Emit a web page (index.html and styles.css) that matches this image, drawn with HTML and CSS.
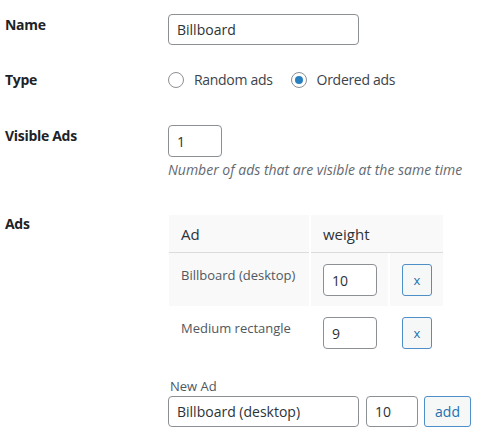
FILE: index.html
```html
<!DOCTYPE html>
<html>
<head>
<meta charset="utf-8">
<link rel="stylesheet" href="styles.css">
</head>
<body>
<div class="form">
  <div class="row row-name">
    <div class="label">Name</div>
    <div class="field"><input class="text name-input" type="text" value="Billboard"></div>
  </div>
  <div class="row row-type">
    <div class="label">Type</div>
    <div class="field radios">
      <label class="radio"><span class="circle"></span><span>Random ads</span></label>
      <label class="radio"><span class="circle checked"></span><span>Ordered ads</span></label>
    </div>
  </div>
  <div class="row row-visible">
    <div class="label">Visible Ads</div>
    <div class="field">
      <input class="text small-input" type="text" value="1">
      <p class="description">Number of ads that are visible at the same time</p>
    </div>
  </div>
  <div class="row row-ads">
    <div class="label">Ads</div>
    <div class="field">
      <table class="ads">
        <thead>
          <tr><th class="c-ad">Ad</th><th colspan="2">weight</th></tr>
        </thead>
        <tbody>
          <tr class="alt">
            <td class="c-ad name-cell">Billboard (desktop)</td>
            <td class="c-w"><input class="text weight-input" type="text" value="10"></td>
            <td class="c-x"><button class="btn x-btn">x</button></td>
          </tr>
          <tr>
            <td class="c-ad name-cell">Medium rectangle</td>
            <td class="c-w"><input class="text weight-input" type="text" value="9"></td>
            <td class="c-x"><button class="btn x-btn">x</button></td>
          </tr>
        </tbody>
      </table>
      <div class="new-ad">
        <div class="new-label">New Ad</div>
        <div class="new-row">
          <input class="text new-name" type="text" value="Billboard (desktop)">
          <input class="text new-weight" type="text" value="10">
          <button class="btn add-btn">add</button>
        </div>
      </div>
    </div>
  </div>
</div>
</body>
</html>
```
FILE: styles.css
```css
html, body {
  margin: 0;
  padding: 0;
  background: #ffffff;
}
body {
  font-family: "Open Sans", "Noto Sans", sans-serif;
  font-size: 14px;
  color: #3c434a;
}
.form {
  padding-left: 5px;
}
.row {
  display: flex;
  align-items: flex-start;
}
.label {
  width: 163px;
  flex: none;
  font-weight: 700;
  color: #1d2327;
  line-height: 18px;
  letter-spacing: -0.3px;
}
.field {
  flex: 1;
}
.text {
  box-sizing: border-box;
  font-family: inherit;
  font-size: 14px;
  color: #2c3338;
  border: 1px solid #8c8f94;
  border-radius: 4px;
  background: #fff;
  padding: 0 8px;
  margin: 0;
  outline: none;
  display: block;
}
.row-name {
  padding-top: 14px;
}
.row-name .label {
  padding-top: 2px;
}
.name-input {
  width: 191px;
  height: 31px;
}
.row-type {
  margin-top: 25px;
  align-items: center;
  height: 20px;
}
.radios {
  display: flex;
  align-items: center;
  letter-spacing: -0.3px;
}
.radio {
  display: flex;
  align-items: center;
  line-height: 20px;
  margin-right: 18px;
}
.circle {
  box-sizing: border-box;
  width: 16px;
  height: 16px;
  border: 1px solid #8c8f94;
  border-radius: 50%;
  margin-right: 10px;
  display: flex;
  align-items: center;
  justify-content: center;
}
.circle.checked::after {
  content: "";
  width: 8px;
  height: 8px;
  border-radius: 50%;
  background: #2a7fc1;
}
.row-visible {
  margin-top: 35px;
}
.row-visible .label {
  padding-top: 2px;
}
.small-input {
  width: 54px;
  height: 32px;
}
.description {
  margin: 4px 0 0;
  font-style: italic;
  color: #646970;
  line-height: 18px;
  font-size: 14px;
}
.row-ads {
  margin-top: 36px;
}
.ads {
  border-collapse: separate;
  border-spacing: 2px 0;
  margin-left: -1px;
  width: 278px;
}
.ads th {
  text-align: left;
  font-weight: 400;
  font-size: 15px;
  color: #2c3338;
  background: #f9f9f9;
  padding: 10px 11px 9px 12px;
  line-height: 18px;
  border-bottom: 1px solid #dcdcde;
}
.ads td {
  vertical-align: top;
  padding: 0;
}
.ads tr.alt td {
  background: #f9f9f9;
}
.c-ad {
  width: 140px;
  box-sizing: border-box;
}
.name-cell {
  font-size: 13px;
  color: #50575e;
  line-height: 18px;
  padding: 13px 12px 0 !important;
  height: 53px;
  box-sizing: border-box;
}
.c-w {
  width: 77px;
}
.c-w .weight-input {
  margin: 11px 0 10px 12px;
  width: 54px;
  height: 32px;
}
.c-x {
  width: 53px;
}
.btn {
  box-sizing: border-box;
  font-family: inherit;
  font-size: 14px;
  color: #2271b1;
  background: #f6f7f7;
  border: 1px solid #4f8fc8;
  border-radius: 3px;
  padding: 0;
  margin: 0;
  cursor: pointer;
}
.x-btn {
  display: block;
  width: 30px;
  height: 32px;
  margin: 11px 0 0 12px;
  font-size: 13px;
}
.new-ad {
  margin-top: 18px;
}
.new-label {
  font-size: 13px;
  color: #50575e;
  line-height: 18px;
  padding-left: 2px;
}
.new-row {
  display: flex;
  align-items: center;
  margin-top: 1px;
}
.new-name {
  width: 191px;
  height: 31px;
}
.new-weight {
  width: 52px;
  height: 31px;
  margin-left: 7px;
}
.add-btn {
  width: 47px;
  height: 31px;
  margin-left: 6px;
}
```
